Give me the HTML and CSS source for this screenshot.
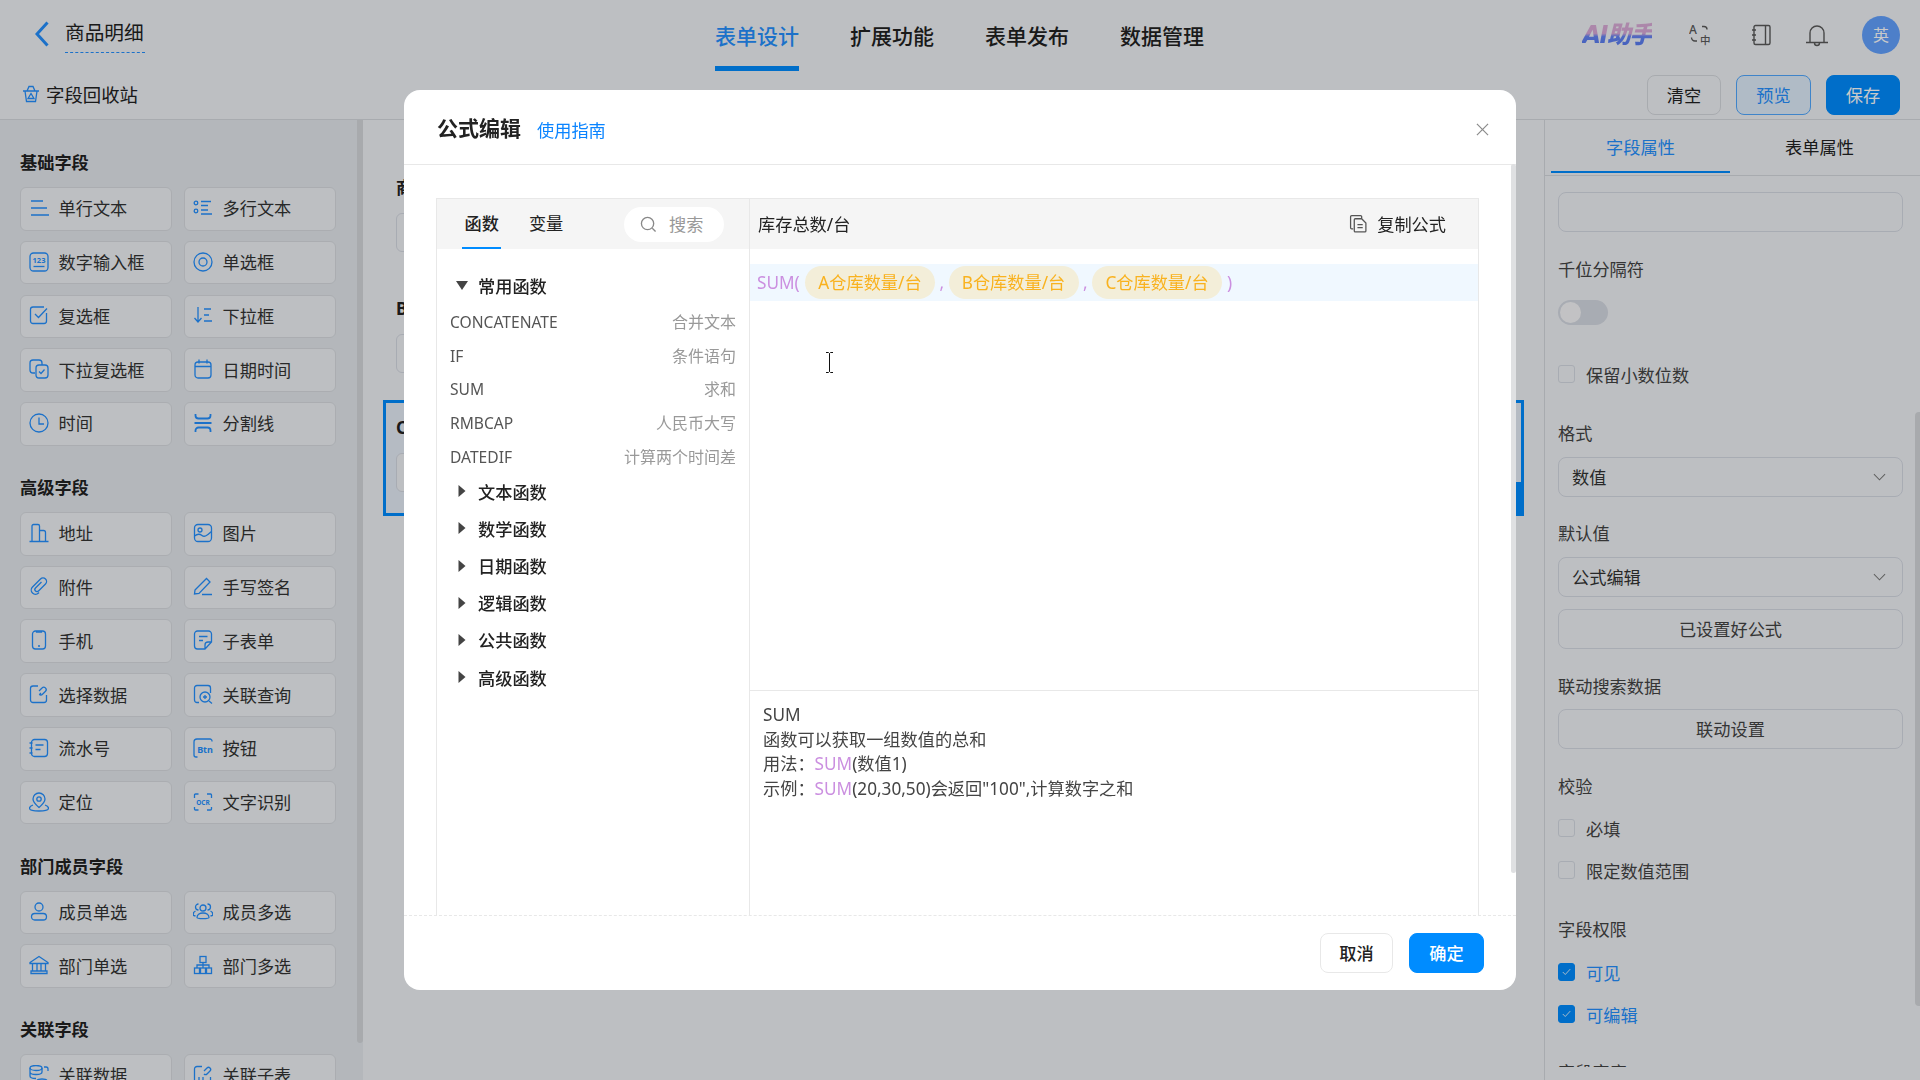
FILE: index.html
```html
<!DOCTYPE html>
<html lang="zh-CN">
<head>
    <meta charset="UTF-8">
    <title>公式编辑</title>
    <link rel="stylesheet" href="styles.css">
</head>
<body>
<div class="page">
    <header class="topbar">
        <div class="back">
            <svg class="back-arrow" viewBox="0 0 14 26"><path d="M12.5 1.5 2 13l10.5 11.5"/></svg>
            <span class="form-name">商品明细</span>
        </div>
        <nav class="nav">
            <a class="nav-item active">表单设计</a>
            <a class="nav-item">扩展功能</a>
            <a class="nav-item">表单发布</a>
            <a class="nav-item">数据管理</a>
        </nav>
        <div class="top-tools">
            <span class="ai-logo">AI助手</span>
            <svg class="tool tool-lang" viewBox="0 -4 22 30"><text x="0" y="10" class="tool-text">A</text><text x="11" y="20" class="tool-text tool-han">中</text><path d="M13 2.500h2a3 3 0 0 1 3 3M2.500 13.500A3.500 3.500 0 0 0 6 17h2"/></svg>
            <svg class="tool tool-book" viewBox="0 0 21 22"><rect x="3" y="1.500" width="16" height="19" rx="1.500"/><path d="M14.500 1.500v19M1 6h4M1 11h4M1 16h4"/></svg>
            <svg class="tool tool-bell" viewBox="0 0 24 24"><path d="M5 19V10a7 7 0 0 1 14 0v9M1 19.500h22M9.500 20a2.500 2.500 0 0 0 5 0"/></svg>
            <span class="avatar">英</span>
        </div>
    </header>

    <div class="toolbar">
        <div class="recycle">
            <svg class="recycle-icon" viewBox="0 0 18 18"><path d="M1 6h16M3 6l1.500 10.500h9L15 6M5 6l2-4.500h4L13 6M9 8.500 6 13.500h6z"/></svg>
            字段回收站
        </div>
        <div class="actions">
            <button class="btn">清空</button>
            <button class="btn btn-ghost">预览</button>
            <button class="btn btn-primary">保存</button>
        </div>
    </div>

    <main class="main">
        <aside class="sidebar">
            <div class="field-list">
                <h3 class="group-title">基础字段</h3>
                <div class="field-grid">
                    <div class="field"><svg class="ico" viewBox="0 0 20 20"><path d="M2 3h12M2 10h16M2 17h18"/></svg>单行文本</div>
                    <div class="field"><svg class="ico" viewBox="0 0 20 20"><circle cx="3" cy="5" r="1.800"/><circle cx="3" cy="13" r="1.800"/><path d="M8 3.500h10M8 7.500h7M8 12h7M8 16h11"/></svg>多行文本</div>
                    <div class="field"><svg class="ico" viewBox="0 0 20 20"><rect x="1" y="1" width="18" height="18" rx="3.500"/><text x="10" y="10.500" class="ico-text">123</text><path d="M4.500 14.500h11"/></svg>数字输入框</div>
                    <div class="field"><svg class="ico" viewBox="0 0 20 20"><circle cx="10" cy="10" r="9"/><circle cx="10" cy="10" r="4"/></svg>单选框</div>
                    <div class="field"><svg class="ico" viewBox="0 0 20 20"><path d="M17.500 8v8a2.500 2.500 0 0 1-2.500 2.500H4A2.500 2.500 0 0 1 1.500 16V4.500A2.500 2.500 0 0 1 4 2h11"/><path d="m6 9 3.500 3.500L18 3.500"/></svg>复选框</div>
                    <div class="field"><svg class="ico" viewBox="0 0 20 20"><path d="M5 2v15M1.500 13 5 17l3.500-4M11 4h7M11 10h5M11 16h8"/></svg>下拉框</div>
                    <div class="field"><svg class="ico" viewBox="0 0 20 20"><path d="M6 14H4a3 3 0 0 1-3-3V4a3 3 0 0 1 3-3h6a3 3 0 0 1 3 3v2"/><rect x="7" y="6" width="12" height="13" rx="3"/><path d="m10 12.500 2 2 3.500-4"/></svg>下拉复选框</div>
                    <div class="field"><svg class="ico" viewBox="0 0 20 20"><rect x="2" y="3" width="16" height="16" rx="3"/><path d="M2 7.500h16M6 .5v4M14 .5v4"/></svg>日期时间</div>
                    <div class="field"><svg class="ico" viewBox="0 0 20 20"><circle cx="10" cy="10" r="9"/><path d="M10 4.500V11h5"/></svg>时间</div>
                    <div class="field"><svg class="ico" viewBox="0 0 20 20"><path d="M2.500 1v1.500a3 3 0 0 0 3 3h9a3 3 0 0 0 3-3V1M1.500 10h17M2.500 19v-1.500a3 3 0 0 1 3-3h9a3 3 0 0 1 3 3V19" stroke-width="1.800"/></svg>分割线</div>
                </div>

                <h3 class="group-title">高级字段</h3>
                <div class="field-grid">
                    <div class="field"><svg class="ico" viewBox="0 0 20 20"><path d="M3 18.500V3a1.500 1.500 0 0 1 1.500-1.500H9A1.500 1.500 0 0 1 10.500 3v15.500M10.500 7.500h4a2 2 0 0 1 2 2v9M.5 18.500h19"/></svg>地址</div>
                    <div class="field"><svg class="ico" viewBox="0 0 20 20"><rect x="1.500" y="1.500" width="17" height="17" rx="3.500"/><circle cx="7" cy="7" r="2"/><path d="M1.500 13c3-2.500 5-2.500 7.500-.5s5 0 9.500-4"/></svg>图片</div>
                    <div class="field"><svg class="ico" viewBox="0 0 20 20"><path d="m12.500 6-6 6a2 2 0 0 0 3 3l7-7a3.500 3.500 0 0 0-5-5l-8 8a4.200 4.200 0 0 0 6 6l.5-.5"/></svg>附件</div>
                    <div class="field"><svg class="ico" viewBox="0 0 20 20"><path d="M2 14 13.500 2.500l3.500 3.500L6 17.500l-4.500.5zM9 18.500h10"/></svg>手写签名</div>
                    <div class="field"><svg class="ico" viewBox="0 0 20 20"><rect x="3.500" y="1" width="13" height="18" rx="3"/><path d="M7.500 1v1h5V1M9 16h2"/></svg>手机</div>
                    <div class="field"><svg class="ico" viewBox="0 0 20 20"><path d="M18.500 12V4a3 3 0 0 0-3-3h-11a3 3 0 0 0-3 3v12a3 3 0 0 0 3 3H12zM6 6.500h8.500M6 10.500h4M18.500 12H15a3 3 0 0 0-3 3v4"/></svg>子表单</div>
                    <div class="field"><svg class="ico" viewBox="0 0 20 20"><path d="M17.500 11v5A2.500 2.500 0 0 1 15 18.500H4A2.500 2.500 0 0 1 1.500 16V4.500A2.500 2.500 0 0 1 4 2h5"/><path d="m10 7 3-3a2.300 2.300 0 0 1 3.500 3.300l-3 3a2.300 2.300 0 0 1-3.300 0M12 9l-1.500 1.500"/></svg>选择数据</div>
                    <div class="field"><svg class="ico" viewBox="0 0 20 20"><path d="M6 18.500H4A2.500 2.500 0 0 1 1.500 16V4A2.500 2.500 0 0 1 4 1.500h11A2.500 2.500 0 0 1 17.500 4v5"/><circle cx="12" cy="13" r="5"/><path d="M12 11v4M10 13h4M16 17l3 2.500"/></svg>关联查询</div>
                    <div class="field"><svg class="ico" viewBox="0 0 20 20"><rect x="2.500" y="1.500" width="16" height="17" rx="3"/><path d="M6.500 7h8M6.500 11.500h5M.5 5h3M.5 10h3M.5 15h3"/></svg>流水号</div>
                    <div class="field"><svg class="ico" viewBox="0 0 20 20"><path d="M19 3.500V3a2 2 0 0 0-2-2H4a3 3 0 0 0-3 3v13a2 2 0 0 0 2 2h1.500"/><text x="12" y="15" class="ico-btn">Btn</text></svg>按钮</div>
                    <div class="field"><svg class="ico" viewBox="0 0 20 20"><path d="M10 15.500C6.500 12.500 4 10 4 7a6 6 0 0 1 12 0c0 3-2.500 5.500-6 8.500z"/><circle cx="10" cy="7" r="2.200"/><path d="M4 13c-2 .8-3.500 2-3.500 3.200 0 1.500 3 2.800 9.500 2.800s9.500-1.300 9.500-2.800c0-1.200-1.500-2.400-3.500-3.200"/></svg>定位</div>
                    <div class="field"><svg class="ico" viewBox="0 0 20 20"><path d="M1.500 6V3a1 1 0 0 1 1-1h3M14 2h3.500a1 1 0 0 1 1 1v3M18.500 15v2a1 1 0 0 1-1 1H14M5.500 18h-3a1 1 0 0 1-1-1v-2"/><text x="10" y="12.500" class="ico-ocr">OCR</text></svg>文字识别</div>
                </div>

                <h3 class="group-title">部门成员字段</h3>
                <div class="field-grid">
                    <div class="field"><svg class="ico" viewBox="0 0 20 20"><circle cx="10" cy="6" r="4"/><rect x="2.500" y="12.500" width="15" height="6.500" rx="3.250"/></svg>成员单选</div>
                    <div class="field"><svg class="ico" viewBox="0 0 20 20"><circle cx="10" cy="7" r="3"/><path d="M4 16.500c0-6 12-6 12 0 0 1.500-12 1.500-12 0zM5.500 3a3 3 0 0 0 0 6M14.500 3a3 3 0 0 1 0 6M2.500 10c-2 1-2.500 3-2 4.500l2 .5M17.500 10c2 1 2.500 3 2 4.500l-2 .5"/></svg>成员多选</div>
                    <div class="field"><svg class="ico" viewBox="0 0 20 20"><path d="M1 7.500 10 1.500l9 6v1H1zM3.500 9v7M8 9v7M12 9v7M16.500 9v7M2 16h16v2.500H2z"/></svg>部门单选</div>
                    <div class="field"><svg class="ico" viewBox="0 0 20 20"><rect x="7" y="1.500" width="6" height="6"/><rect x="1.500" y="13" width="5" height="5.500"/><rect x="7.500" y="13" width="5" height="5.500"/><rect x="13.500" y="13" width="5" height="5.500"/><path d="M10 7.500V13M4 13v-3h12v3"/></svg>部门多选</div>
                </div>

                <h3 class="group-title">关联字段</h3>
                <div class="field-grid">
                    <div class="field"><svg class="ico" viewBox="0 0 20 20"><ellipse cx="7" cy="3" rx="6" ry="2.500"/><path d="M1 3v8c0 1.500 3 2.500 6 2.500M1 7c0 1.500 3 2.500 6 2.500s6-1 6-2.500V3M15 2h2a2 2 0 0 1 2 2v2"/><ellipse cx="13" cy="16" rx="5" ry="2"/></svg>关联数据</div>
                    <div class="field"><svg class="ico" viewBox="0 0 20 20"><path d="M9 1.500H4A2.500 2.500 0 0 0 1.500 4v12A2.500 2.500 0 0 0 4 18.500h11a2.500 2.500 0 0 0 2.500-2.500v-4M6 12v3M10 12v3"/><path d="m11 6 3-3a2 2 0 0 1 3 3l-3 3a2 2 0 0 1-3 0"/></svg>关联子表</div>
                </div>
            </div>
            <div class="side-thumb"></div>
        </aside>

        <section class="canvas">
            <div class="cell">
                <div class="cell-label">商品名称</div>
                <div class="cell-input"></div>
            </div>
            <div class="cell">
                <div class="cell-label">B仓库数量/台</div>
                <div class="cell-input"></div>
            </div>
            <div class="cell selected">
                <div class="cell-label">C仓库数量/台</div>
                <div class="cell-input"></div>
                <div class="cell-handle"></div>
            </div>
        </section>

        <aside class="props">
            <div class="props-tabs">
                <div class="props-tab active">字段属性</div>
                <div class="props-tab">表单属性</div>
            </div>
            <div class="props-body">
                <div class="box"></div>

                <div class="prop-label gap-25">千位分隔符</div>
                <div class="switch"><span class="knob"></span></div>

                <div class="check gap-38"><span class="tick"></span>保留小数位数</div>

                <div class="prop-label gap-34">格式</div>
                <div class="box select">数值<svg class="chev" viewBox="0 0 14 8"><path d="m1 1 6 6 6-6"/></svg></div>

                <div class="prop-label gap-24">默认值</div>
                <div class="box select">公式编辑<svg class="chev" viewBox="0 0 14 8"><path d="m1 1 6 6 6-6"/></svg></div>
                <div class="box wide-btn">已设置好公式</div>

                <div class="prop-label gap-25">联动搜索数据</div>
                <div class="box wide-btn tight">联动设置</div>

                <div class="prop-label gap-25">校验</div>
                <div class="check gap-19"><span class="tick"></span>必填</div>
                <div class="check gap-18"><span class="tick"></span>限定数值范围</div>

                <div class="prop-label gap-34">字段权限</div>
                <div class="check on gap-20"><span class="tick"><svg viewBox="0 0 18 18"><path d="m4.500 9 3 3 6-6.500"/></svg></span>可见</div>
                <div class="check on gap-18"><span class="tick"><svg viewBox="0 0 18 18"><path d="m4.500 9 3 3 6-6.500"/></svg></span>可编辑</div>

                <div class="prop-label gap-33">字段宽度</div>
            </div>
            <div class="props-thumb"></div>
        </aside>
    </main>
</div>

<div class="mask"></div>

<div class="modal">
    <div class="modal-head">
        <span class="modal-title">公式编辑</span>
        <a class="guide">使用指南</a>
        <svg class="close" viewBox="0 0 14 14"><path d="m1 1 12 12M13 1 1 13"/></svg>
    </div>
    <div class="modal-body">
        <div class="editor-box">
            <div class="fn-pane">
                <div class="fn-head">
                    <span class="fn-tab active">函数</span>
                    <span class="fn-tab">变量</span>
                    <div class="search">
                        <svg class="search-ico" viewBox="0 0 18 18"><circle cx="8" cy="8" r="6.500"/><path d="m13 13 3.500 3.500"/></svg>
                        搜索
                    </div>
                </div>
                <div class="fn-list">
                    <div class="fn-group"><svg class="caret" viewBox="0 0 12 12"><path d="M0 1h12L6 10z"/></svg>常用函数</div>
                    <div class="fn-row"><span>CONCATENATE</span><em>合并文本</em></div>
                    <div class="fn-row"><span>IF</span><em>条件语句</em></div>
                    <div class="fn-row"><span>SUM</span><em>求和</em></div>
                    <div class="fn-row"><span>RMBCAP</span><em>人民币大写</em></div>
                    <div class="fn-row"><span>DATEDIF</span><em>计算两个时间差</em></div>
                    <div class="fn-group"><svg class="caret" viewBox="0 0 12 12"><path d="M2.500 0v12L9.500 6z"/></svg>文本函数</div>
                    <div class="fn-group"><svg class="caret" viewBox="0 0 12 12"><path d="M2.500 0v12L9.500 6z"/></svg>数学函数</div>
                    <div class="fn-group"><svg class="caret" viewBox="0 0 12 12"><path d="M2.500 0v12L9.500 6z"/></svg>日期函数</div>
                    <div class="fn-group"><svg class="caret" viewBox="0 0 12 12"><path d="M2.500 0v12L9.500 6z"/></svg>逻辑函数</div>
                    <div class="fn-group"><svg class="caret" viewBox="0 0 12 12"><path d="M2.500 0v12L9.500 6z"/></svg>公共函数</div>
                    <div class="fn-group"><svg class="caret" viewBox="0 0 12 12"><path d="M2.500 0v12L9.500 6z"/></svg>高级函数</div>
                </div>
            </div>
            <div class="formula-pane">
                <div class="formula-head">
                    <span>库存总数/台</span>
                    <span class="copy">
                        <svg class="copy-ico" viewBox="0 0 18 18"><path d="M12 4V2.500a1 1 0 0 0-1-1H2.500a1 1 0 0 0-1 1V13a1 1 0 0 0 1 1H4"/><path d="M5 5.500a1 1 0 0 1 1-1h6l4 4V16a1 1 0 0 1-1 1H6a1 1 0 0 1-1-1zM8 10h5M8 13h5"/></svg>
                        复制公式
                    </span>
                </div>
                <div class="formula-line">
                    <span class="fn-name">SUM(</span>
                    <span class="chip">A仓库数量/台</span>
                    <span class="comma">,</span>
                    <span class="chip">B仓库数量/台</span>
                    <span class="comma">,</span>
                    <span class="chip">C仓库数量/台</span>
                    <span class="fn-name close-paren">)</span>
                </div>
                <div class="formula-space">
                    <svg class="ibeam" viewBox="0 0 9 21"><path d="M1 .5h2.500L4.500 1.500 5.500.5H8M4.500 1.500v18M1 20.500h2.500l1-1 1 1H8"/></svg>
                </div>
                <div class="fn-desc">
                    <div>SUM</div>
                    <div>函数可以获取一组数值的总和</div>
                    <div>用法：<span class="purple">SUM</span>(数值1)</div>
                    <div>示例：<span class="purple">SUM</span>(20,30,50)会返回"100",计算数字之和</div>
                </div>
            </div>
        </div>
    </div>
    <div class="modal-foot">
        <button class="foot-btn">取消</button>
        <button class="foot-btn foot-ok">确定</button>
    </div>
    <div class="modal-thumb"></div>
</div>
</body>
</html>
```
FILE: styles.css
```css
* {
    box-sizing: border-box;
}

html, body {
    margin: 0;
    padding: 0;
    height: 100%;
    overflow: hidden;
}

body {
    font-family: "Noto Sans", "Noto Sans CJK SC", sans-serif;
    font-size: 17.2px;
    color: #222;
    background: #f0f3f7;
}

button {
    font-family: inherit;
}

.page {
    display: flex;
    flex-direction: column;
    height: 1080px;
}

/* top bar */
.topbar {
    display: grid;
    grid-template-columns: 1fr auto 1fr;
    height: 72px;
    flex: none;
}

.back {
    display: flex;
    align-items: flex-start;
    padding: 21px 0 0 35px;
}

.back-arrow {
    width: 14px;
    height: 26px;
    fill: none;
    stroke: #2490ff;
    stroke-width: 3;
}

.form-name {
    margin-left: 16px;
    width: 80px;
    height: 33px;
    margin-top: -1px;
    font-size: 19.7px;
    line-height: 25px;
    border-bottom: 1px dashed #2490ff;
}

.nav {
    display: flex;
    gap: 51px;
    margin-left: -1px;
}

.nav-item {
    display: block;
    height: 71px;
    width: 84px;
    font-size: 21px;
    font-weight: 500;
    line-height: 73px;
    border-bottom: 5px solid transparent;
}

.nav-item.active {
    color: #2490ff;
    border-bottom-color: #008cff;
}

.top-tools {
    display: flex;
    align-items: center;
    justify-content: flex-end;
    padding: 0 20px 0 0;
    height: 70px;
}

.ai-logo {
    font-family: "DejaVu Sans", "Noto Sans CJK SC", sans-serif;
    font-size: 24px;
    line-height: 26px;
    font-weight: 900;
    font-style: italic;
    letter-spacing: -1.5px;
    background: linear-gradient(180deg, #dcaed8 0, #d8a8d8 44%, #6585f5 56%, #5478f0 100%);
    -webkit-background-clip: text;
    background-clip: text;
    color: transparent;
    margin-right: 37px;
}

.tool {
    fill: none;
    stroke: #5a5a5a;
    stroke-width: 1.4;
}

.tool-lang {
    width: 22px;
    height: 30px;
    margin-right: 40px;
}

.tool-text {
    font-size: 12px;
    font-weight: 500;
    fill: #5a5a5a;
    stroke: none;
}

.tool-han {
    font-size: 10.500px;
}

.tool-book {
    width: 21px;
    height: 22px;
    margin-right: 33px;
}

.tool-bell {
    width: 24px;
    height: 24px;
    margin-right: 33px;
}

.avatar {
    width: 38px;
    height: 38px;
    border-radius: 50%;
    background: #62a1ff;
    color: #fff;
    font-size: 16px;
    text-align: center;
    line-height: 38px;
}

/* toolbar */
.toolbar {
    display: flex;
    align-items: center;
    justify-content: space-between;
    height: 48px;
    flex: none;
    padding: 0 20px 6px 22px;
    border-bottom: 1px solid #d6d9de;
}

.recycle {
    display: flex;
    align-items: center;
    gap: 6px;
    padding-top: 2px;
    font-size: 18.4px;
}

.recycle-icon {
    width: 18px;
    height: 18px;
    fill: none;
    stroke: #2490ff;
    stroke-width: 1.3;
}

.actions {
    display: flex;
    gap: 15px;
    margin-top: 5px;
}

.btn {
    width: 74px;
    height: 40px;
    border: 1px solid #d6d9de;
    border-radius: 8px;
    background: #f0f3f7;
    color: #222;
    font-size: 17.2px;
    padding: 0 0 2px;
}

.btn-ghost {
    width: 75px;
    background: #e0edfb;
    border-color: #50a8ff;
    color: #2490ff;
}

.btn-primary {
    background: #008cff;
    border-color: #008cff;
    color: #fff;
}

/* main */
.main {
    display: flex;
    flex: 1;
    min-height: 0;
}

.sidebar {
    display: flex;
    width: 363px;
    flex: none;
    overflow: hidden;
    background: #e5e9ee;
}

.field-list {
    width: 357px;
    padding: 30px 0 0 20px;
}

.side-thumb {
    width: 6px;
    height: 923px;
    border-radius: 0 0 4px 4px;
    background: #d5d8dc;
}

.group-title {
    height: 24px;
    margin: 29.200px 0 13px;
    font-size: 17.2px;
    font-weight: 700;
    line-height: 26px;
}

.group-title:first-child {
    margin-top: 0;
}

.field-grid {
    display: grid;
    grid-template-columns: 152px 152px;
    column-gap: 12px;
    row-gap: 10.200px;
}

.field {
    display: flex;
    align-items: center;
    gap: 10px;
    height: 43.600px;
    padding: 0 0 2px 7.500px;
    border: 1px solid #d9dce1;
    border-radius: 6px;
    background: #f0f3f7;
    color: #333;
}

.ico {
    width: 20px;
    height: 20px;
    flex: none;
    fill: none;
    stroke: #2490ff;
    stroke-width: 1.3;
}

.ico-text {
    font-size: 7.500px;
    font-weight: 700;
    text-anchor: middle;
    fill: #2490ff;
    stroke: none;
}

.ico-btn {
    font-size: 9px;
    font-weight: 700;
    text-anchor: middle;
    fill: #2490ff;
    stroke: none;
}

.ico-ocr {
    font-size: 6.500px;
    font-weight: 700;
    text-anchor: middle;
    fill: #2490ff;
    stroke: none;
}

/* canvas behind the dialog */
.canvas {
    flex: 1;
    min-width: 0;
    overflow: hidden;
    padding: 55px 44px 0 33px;
}

.cell-label {
    font-size: 17.2px;
    font-weight: 700;
    line-height: 26px;
}

.cell-input {
    height: 39px;
    margin-top: 12px;
    border: 1px solid #d6dae3;
    border-radius: 6px;
    background: #f0f3f7;
}

.cell + .cell {
    margin-top: 44px;
}

.cell.selected {
    position: relative;
    height: 116px;
    margin: 27px -24px 0 -13px;
    padding: 12px 10px 0 10px;
    border: 3px solid #008cff;
    background: #e6eef8;
}

.cell-handle {
    position: absolute;
    right: -3px;
    bottom: -3px;
    width: 8px;
    height: 34px;
    background: #008cff;
}

/* right panel */
.props {
    position: relative;
    width: 376px;
    flex: none;
    border-left: 1px solid #d6d9de;
}

.props-tabs {
    display: flex;
    height: 56px;
    padding-left: 6px;
    border-bottom: 1px solid #d6d9de;
}

.props-tab {
    width: 179px;
    height: 53px;
    text-align: center;
    line-height: 56px;
    border-bottom: 2px solid transparent;
}

.props-tab.active {
    color: #2490ff;
    border-bottom-color: #008cff;
}

.props-body {
    width: 359px;
    height: 891px;
    overflow: hidden;
    padding: 16px 0 0 13px;
}

.props-thumb {
    position: absolute;
    right: 0;
    top: 292px;
    width: 5px;
    height: 594px;
    border-radius: 4px 0 0 4px;
    background: #d5d8dc;
}

.box {
    width: 345px;
    height: 40px;
    border: 1px solid #d6dae3;
    border-radius: 8px;
}

.prop-label {
    height: 24px;
    color: #444;
    line-height: 26px;
}

.gap-18 { margin-top: 18px; }
.gap-19 { margin-top: 19px; }
.gap-20 { margin-top: 20px; }
.gap-24 { margin-top: 24px; }
.gap-25 { margin-top: 25px; }
.gap-33 { margin-top: 33px; }
.gap-34 { margin-top: 34px; }
.gap-38 { margin-top: 38px; }

.switch {
    display: flex;
    align-items: center;
    width: 50px;
    height: 25px;
    margin-top: 19px;
    padding-left: 2px;
    border-radius: 13px;
    background: #d6dae3;
}

.knob {
    width: 21px;
    height: 21px;
    border-radius: 50%;
    background: #f6f7f9;
}

.check {
    display: flex;
    align-items: center;
    gap: 11px;
    height: 24px;
    padding-bottom: 2px;
    color: #444;
}

.tick {
    width: 17px;
    height: 18px;
    flex: none;
    border: 1px solid #d6dae3;
    border-radius: 3px;
}

.check.on {
    color: #2490ff;
}

.check.on .tick {
    border-color: #008cff;
    background: #008cff;
}

.tick svg {
    display: block;
    width: 15px;
    height: 16px;
    fill: none;
    stroke: #fff;
    stroke-width: 1;
}

.select {
    display: flex;
    align-items: center;
    justify-content: space-between;
    margin-top: 12px;
    padding: 0 16px 2px 13px;
    color: #333;
}

.chev {
    width: 13px;
    height: 8px;
    fill: none;
    stroke: #7a7a7a;
    stroke-width: 1.1;
    margin-top: 2px;
}

.wide-btn {
    margin-top: 12px;
    text-align: center;
    line-height: 40px;
    color: #444;
}

.wide-btn.tight {
    margin-top: 11px;
}

/* dialog */
.mask {
    position: fixed;
    inset: 0;
    background: rgba(0, 0, 0, 0.21);
}

.modal {
    position: fixed;
    left: 404px;
    top: 90px;
    display: flex;
    flex-direction: column;
    width: 1112px;
    height: 900px;
    overflow: hidden;
    border-radius: 16px;
    background: #fff;
}

.modal-head {
    display: flex;
    align-items: center;
    height: 75px;
    flex: none;
    padding: 4px 27px 0 33px;
    border-bottom: 1px solid #e8e8e8;
}

.modal-title {
    font-size: 21px;
    font-weight: 700;
    margin-top: -5px;
}

.guide {
    margin-left: 16px;
    font-size: 17.2px;
    color: #0a84ff;
    margin-top: 1px;
}

.close {
    width: 13px;
    height: 13px;
    margin-left: auto;
    fill: none;
    stroke: #8c8c8c;
    stroke-width: 1.3;
}

.modal-body {
    flex: 1;
    min-height: 0;
    overflow: hidden;
    padding: 33px 37px 0 32px;
}

.editor-box {
    display: flex;
    height: 760px;
    border: 1px solid #e8e8e8;
}

.fn-pane {
    width: 313px;
    flex: none;
    border-right: 1px solid #e8e8e8;
}

.fn-head {
    display: flex;
    align-items: center;
    height: 50px;
    padding: 0 25px;
    background: #f5f5f5;
}

.fn-tab {
    height: 50px;
    padding: 0 2.500px;
    margin-right: 25px;
    line-height: 50px;
    border-bottom: 2px solid transparent;
}

.fn-tab.active {
    font-weight: 500;
    border-bottom-color: #008cff;
}

.search {
    display: flex;
    align-items: center;
    gap: 12px;
    width: 100px;
    height: 35px;
    margin-left: auto;
    padding: 0 0 2px 16px;
    border-radius: 18px;
    background: #fff;
    color: #999;
}

.search-ico {
    width: 17px;
    height: 17px;
    fill: none;
    stroke: #888;
    stroke-width: 1.4;
    margin-top: 2px;
}

.fn-list {
    padding-top: 18px;
}

.fn-group {
    display: flex;
    align-items: center;
    gap: 10px;
    height: 37.200px;
    padding-left: 19px;
    font-weight: 500;
}

.caret {
    width: 12px;
    height: 12px;
    fill: #444;
}

.fn-row {
    display: flex;
    align-items: center;
    justify-content: space-between;
    height: 33.700px;
    padding: 0 13px;
    font-size: 15.600px;
    color: #555;
}

.fn-row span {
    padding-top: 2px;
}

.fn-row em {
    font-style: normal;
    font-size: 16px;
    color: #999;
}

.formula-pane {
    display: flex;
    flex-direction: column;
    flex: 1;
    min-width: 0;
}

.formula-head {
    display: flex;
    align-items: center;
    justify-content: space-between;
    height: 50px;
    flex: none;
    padding: 0 32px 2px 8px;
    background: #f5f5f5;
}

.copy {
    display: flex;
    align-items: center;
    gap: 9px;
}

.copy-ico {
    width: 19px;
    height: 19px;
    fill: none;
    stroke: #555;
    stroke-width: 1.2;
}

.formula-line {
    display: flex;
    align-items: center;
    height: 37px;
    margin-top: 15px;
    flex: none;
    padding-left: 7px;
    background: #f0f8ff;
}

.fn-name {
    width: 48px;
    font-size: 17.2px;
    color: #cb8fe0;
}

.close-paren {
    margin-left: 5px;
}

.chip {
    width: 130px;
    height: 33px;
    border-radius: 17px;
    background: #f3eed9;
    color: #f9b21f;
    text-align: center;
    line-height: 33px;
}

.comma {
    width: 13.500px;
    text-align: center;
    color: #cb8fe0;
}

.formula-space {
    position: relative;
    height: 390px;
    flex: none;
    border-bottom: 1px solid #e8e8e8;
}

.ibeam {
    position: absolute;
    left: 75px;
    top: 51px;
    width: 9px;
    height: 21px;
    fill: none;
    stroke: #111;
    stroke-width: 1;
}

.fn-desc {
    padding: 12px 13px 0;
    font-size: 17.2px;
    line-height: 24.600px;
    color: #444;
}

.purple {
    color: #cb8fe0;
}

.modal-foot {
    display: flex;
    justify-content: flex-end;
    gap: 16px;
    height: 75px;
    flex: none;
    padding: 17px 32px 0 0;
    border-top: 1px dashed #e8e8e8;
}

.foot-btn {
    width: 73px;
    height: 40px;
    padding: 0 0 2px;
    border: 1px solid #e8e8e8;
    border-radius: 8px;
    background: #fff;
    color: #222;
    font-size: 17.2px;
    font-weight: 500;
}

.foot-ok {
    width: 75px;
    border-color: #008cff;
    background: #008cff;
    color: #fff;
}

.modal-thumb {
    position: absolute;
    right: 0;
    top: 74px;
    width: 5px;
    height: 709px;
    border-radius: 4px;
    background: #dfe0e2;
}
```
